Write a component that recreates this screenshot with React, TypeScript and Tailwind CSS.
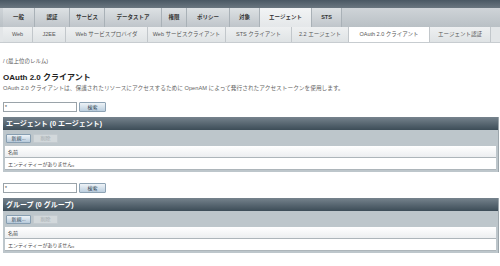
const mainTabs = [
  { label: '一般', w: 'w-[32px]' },
  { label: '認証', w: 'w-[35px]' },
  { label: 'サービス', w: 'w-[35px]' },
  { label: 'データストア', w: 'w-[57px]' },
  { label: '権限', w: 'w-[25px]' },
  { label: 'ポリシー', w: 'w-[43px]' },
  { label: '対象', w: 'w-[30px]' },
  { label: 'エージェント', w: 'w-[52px]', active: true },
  { label: 'STS', w: 'w-[30px]' },
];

const subTabs = [
  { label: 'Web', w: 'w-[30px]' },
  { label: 'J2EE', w: 'w-[33px]' },
  { label: 'Web サービスプロバイダ', w: 'w-[82px]' },
  { label: 'Web サービスクライアント', w: 'w-[78px]' },
  { label: 'STS クライアント', w: 'w-[66px]' },
  { label: '2.2 エージェント', w: 'w-[57px]' },
  { label: 'OAuth 2.0 クライアント', w: 'w-[81px]', active: true },
  { label: 'エージェント認証', w: 'w-[61px]' },
];

function SearchBar() {
  return (
    <div className="flex items-center gap-[2px] h-[10px]">
      <div className="w-[74px] h-[10px] border border-[#9aa3a9] bg-white text-[5px] leading-[8px] pl-[1px] text-[#333]">*</div>
      <button className="w-[27px] h-[10px] border border-[#8ea3b4] rounded-[1px] bg-gradient-to-b from-[#eef3f7] to-[#bccfdf] text-[5px] leading-[8px] text-[#2c3e50]">
        検索
      </button>
    </div>
  );
}

function Section({ title }: { title: string }) {
  return (
    <div className="mr-[1px] border-r border-[#9ba5ab]">
      <div className="h-[13px] bg-gradient-to-b from-[#76838d] to-[#3d4d58] text-white font-bold text-[7px] leading-[13px] pl-[3px]">
        {title}
      </div>
      <div className="bg-[#bdc6cb] px-[2px] pb-[2px]">
        <div className="flex items-center gap-[2px] h-[16px] pl-[1px]">
          <button className="w-[25px] h-[9px] border border-[#879eb1] rounded-[1px] bg-gradient-to-b from-[#eef3f7] to-[#b7cadb] text-[5px] leading-[7px] text-[#2c3e50]">
            新規...
          </button>
          <button className="w-[25px] h-[9px] border border-[#c3cacf] rounded-[1px] bg-[#d2d8db] text-[5px] leading-[7px] text-[#a2a9ae]">
            削除
          </button>
        </div>
        <div className="h-[12px] bg-gradient-to-b from-white to-[#eceef0] border-b border-[#adb5ba] text-[5px] leading-[12px] pl-[3px] text-[#333]">
          名前
        </div>
        <div className="h-[12px] bg-white border-b border-[#adb5ba] text-[5px] leading-[12px] pl-[3px] text-[#444]">
          エンティティーがありません。
        </div>
      </div>
    </div>
  );
}

export default function App() {
  return (
    <div
      className="w-[500px] h-[266px] overflow-hidden bg-white"
      style={{ fontFamily: '"Liberation Sans", "Noto Sans CJK JP", sans-serif' }}
    >
      <div className="h-[8px] bg-gradient-to-b from-[#4a5864] to-[#6a7680]" />
      <div className="h-[19px] flex pl-[3px] bg-gradient-to-b from-[#cfd4d8] to-[#b9c0c5]">
        {mainTabs.map((t) => (
          <div
            key={t.label}
            className={`${t.w} flex items-center justify-center border-r border-[#a9b1b7] text-[5.5px] font-bold text-[#333] ${
              t.active ? 'bg-gradient-to-b from-[#f2f4f5] to-[#e4e7e9]' : 'bg-gradient-to-b from-[#dde1e4] to-[#bfc5ca]'
            }`}
          >
            {t.label}
          </div>
        ))}
      </div>
      <div className="h-[16px] flex pl-[3px] bg-[#e3e6e8] border-b border-[#c7ccd0]">
        {subTabs.map((t) => (
          <div
            key={t.label}
            className={`${t.w} flex items-center justify-center border-r border-[#c2c7cb] text-[5.5px] text-[#555] ${
              t.active ? 'bg-white' : 'bg-gradient-to-b from-[#eef0f1] to-[#dfe3e5]'
            }`}
          >
            {t.label}
          </div>
        ))}
      </div>

      <div className="pl-[3px]">
        <div className="mt-[15px] text-[5.5px] leading-[6px] text-[#555]">/ (最上位のレルム)</div>
        <div className="mt-[9px] text-[8px] leading-[9px] font-bold text-[#222]">OAuth 2.0 クライアント</div>
        <div className="mt-[3px] text-[5.7px] leading-[6px] text-[#666]">
          OAuth 2.0 クライアントは、保護されたリソースにアクセスするために OpenAM によって発行されたアクセストークンを使用します。
        </div>
        <div className="mt-[11px]">
          <SearchBar />
        </div>
        <div className="mt-[5px]">
          <Section title="エージェント (0 エージェント)" />
        </div>
        <div className="mt-[11px]">
          <SearchBar />
        </div>
        <div className="mt-[5px]">
          <Section title="グループ (0 グループ)" />
        </div>
      </div>
    </div>
  );
}
